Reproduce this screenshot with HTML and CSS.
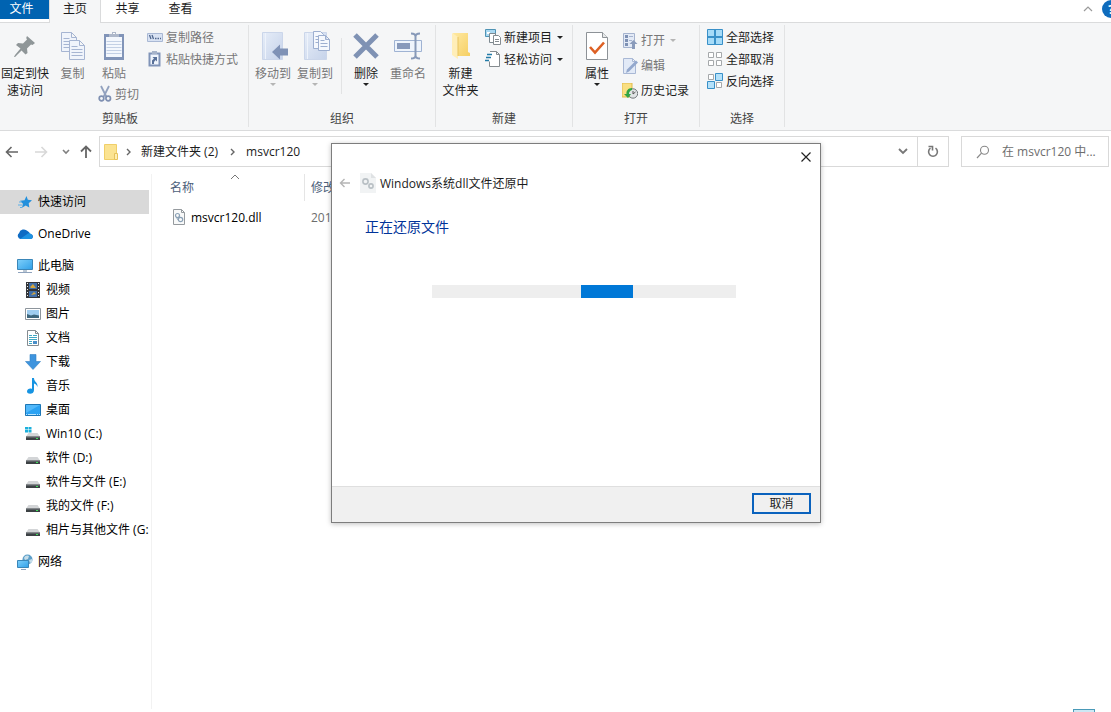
FILE: index.html
```html
<!DOCTYPE html>
<html lang="zh-CN">
<head>
<meta charset="utf-8">
<title>msvcr120</title>
<link rel="stylesheet" href="styles.css">
</head>
<body>
<svg class="defs" aria-hidden="true">
  <defs>
    <linearGradient id="blue" x1="0" y1="0" x2="1" y2="1"><stop offset="0" stop-color="#7fd0fa"/><stop offset="1" stop-color="#2f9fe8"/></linearGradient>
    <linearGradient id="pale" x1="0" y1="0" x2="1" y2="1"><stop offset="0" stop-color="#e6edf8"/><stop offset="1" stop-color="#c6d3ea"/></linearGradient>
    <linearGradient id="gold" x1="0" y1="0" x2="1" y2="1"><stop offset="0" stop-color="#ffe9a2"/><stop offset="1" stop-color="#f5cf63"/></linearGradient>
    <symbol id="drive" viewBox="0 0 16 16"><path d="M3.500 7h9l2.500 3.500H1z" fill="#d3d5d7"/><path d="M1 10.500h14v3.500H1z" fill="#3c4144"/><path d="M1 10.500h14v1H1z" fill="#777c80"/><path d="M11 12h2v1h-2z" fill="#3fe05a"/></symbol>
  </defs>
</svg>

<div class="window">
  <nav class="tabs" aria-label="功能区">
    <button class="tab tab-file">文件</button>
    <button class="tab tab-active">主页</button>
    <button class="tab tab-plain">共享</button>
    <button class="tab tab-plain">查看</button>
    <div class="tabs-end">
      <button class="icon-btn" aria-label="折叠"><svg width="10" height="6" viewBox="0 0 10 6"><path d="M1 5l4-4 4 4" fill="none" stroke="#9a9a9a" stroke-width="1.200"/></svg></button>
      <button class="help" aria-label="帮助">?</button>
    </div>
  </nav>

  <div class="ribbon">
    <section class="group group-clip">
      <div class="tools">
        <button class="big pin"><span class="art"><svg width="24" height="24" viewBox="0 0 24 24"><path d="M14 2l8 7-2.500 2-1.500-.5-4 4 .5 4.500-2 1.500-4-4-6.500 6.500L1 23l1-2 5.500-6.500L3 11l2-2 5 .5 4-4-.8-1.500z" fill="#8f9698"/></svg></span>固定到快<br>速访问</button>
        <button class="big off copy"><span class="art"><svg width="26" height="30" viewBox="0 0 26 30"><g fill="#f0f4fb" stroke="#a6b5d2"><path d="M1.500 1.500h10l5 5v14h-15zM11.500 1.500v5h5"/><path d="M3.500 7.500h6M3.500 10.500h10M3.500 13.500h10M3.500 16.500h10"/><path d="M9.500 9.500h10l5 5v14h-15zM19.500 9.500v5h5"/><path d="M11.500 15.500h6M11.500 18.500h11M11.500 21.500h11M11.500 24.500h11"/></g></svg></span>复制</button>
        <div class="stack">
          <button class="big off paste"><span class="art"><svg width="22" height="30" viewBox="0 0 22 30"><path d="M1 3h20v26H1z" fill="#8194b8"/><path d="M3 6h16v20H3z" fill="#f3f7fd"/><path d="M3.500 10.500h15M3.500 13.500h15M3.500 16.500h15M3.500 19.500h15M3.500 22.500h15" stroke="#c3d0e5"/><path d="M6 3h3V1h4v2h3v3H6z" fill="#aeb8ca"/><path d="M10 2h2v1h-2z" fill="#fff"/></svg></span>粘贴</button>
          <button class="small off cut"><svg width="14" height="18" viewBox="0 0 14 18"><path d="M3 1l5.500 11M11 1L5.500 12" stroke="#92a1be" stroke-width="1.800"/><g fill="none" stroke="#7f90b2" stroke-width="1.700"><circle cx="3.500" cy="13.500" r="2.300"/><circle cx="10.200" cy="13.500" r="2.300"/></g></svg>剪切</button>
        </div>
        <div class="rows rows-clip">
          <button class="small off"><svg width="16" height="16" viewBox="0 0 16 16"><path d="M.5 4.500h15v8H.5z" fill="#d8e2f3" stroke="#a9b8d4"/><path d="M2.500 6l1.500 4M5 6l1.500 4M8 9.500h1.500M10.500 9.500H12M13 9.500h1" stroke="#4f678f" stroke-width="1.300"/></svg>复制路径</button>
          <button class="small off"><svg width="16" height="16" viewBox="0 0 16 16"><path d="M1.500 1.500h12v14h-12z" fill="#8094b8"/><path d="M3.500 3.500h8v10h-8z" fill="#f0f5fc"/><path d="M5 0h5v3H5z" fill="#a6b3c9"/><path d="M5 13V9.500l2-2L5.500 6H10v4.500L8.500 9 7 11v2z" fill="#587099"/></svg>粘贴快捷方式</button>
        </div>
      </div>
      <h2>剪贴板</h2>
    </section>

    <section class="group group-org">
      <div class="tools">
        <button class="big off"><span class="art"><svg width="30" height="30" viewBox="0 0 30 30"><path d="M4.500 1.500h20v27h-20z" fill="url(#pale)" stroke="#cbd6ea"/><path d="M7.500 2v26" stroke="#eef3fb"/><path d="M14 21l8-7.500v4h8v7h-8v4z" fill="#7f92b6"/></svg></span>移动到<i class="drop"></i></button>
        <button class="big off"><span class="art"><svg width="30" height="30" viewBox="0 0 30 30"><path d="M4.500 1.500h22v27h-22z" fill="url(#pale)" stroke="#cbd6ea"/><path d="M7.500 2v26" stroke="#eef3fb"/><g fill="#f5f8fd" stroke="#9dafd0"><path d="M13.500.5h7l3 3v14h-10z"/><path d="M15.500 5.500h3M15.500 8.500h3M15.500 11.500h3"/><path d="M18.500 4.500h7l4 4v11h-11zM25.500 4.500v4h4M20.500 9.500h4M20.500 12.500h7M20.500 15.500h7"/></g></svg></span>复制到<i class="drop"></i></button>
        <div class="split"></div>
        <button class="big"><span class="art"><svg width="28" height="28" viewBox="0 0 28 28"><path d="M3 3l22 22M25 3L3 25" stroke="#7f92b4" stroke-width="5"/></svg></span>删除<i class="drop"></i></button>
        <button class="big off"><span class="art"><svg width="30" height="28" viewBox="0 0 30 28"><path d="M1.500 8.500h27v11h-27z" fill="#eef4fc" stroke="#9fb3d3"/><path d="M4 11h13v6H4z" fill="#8799bb"/><path d="M18 1.500c3 0 4.500 1 4.500 3v19c0 2-1.500 3-4.500 3M27 1.500c-3 0-4.500 1-4.500 3M27 26.500c-3 0-4.500-1-4.500-3" fill="none" stroke="#8799b8" stroke-width="2"/></svg></span>重命名</button>
      </div>
      <h2>组织</h2>
    </section>

    <section class="group group-new">
      <div class="tools">
        <button class="big"><span class="art"><svg width="20" height="30" viewBox="0 0 20 30"><path d="M2 2h15v19l2 1v3H6z" fill="url(#gold)"/><path d="M1 2l6 4v22l-6-4z" fill="#ffeeb8"/><path d="M7 6v19" stroke="#e7c45e"/></svg></span>新建<br>文件夹</button>
        <div class="rows">
          <button class="small"><svg width="16" height="16" viewBox="0 0 16 16"><path d="M.5.500h10v7H.5z" fill="#a9d8f1" stroke="#4f93b4"/><path d="M2 3h3v2H2z" fill="#fff"/><path d="M4.500 4.500h6v9h-6z" fill="#fff" stroke="#7d8990"/><path d="M8.500 6.500h5l2 2v7h-7zM10 10.500h4M10 12.500h4" fill="#fff" stroke="#858c91"/></svg>新建项目<i class="drop"></i></button>
          <button class="small"><svg width="16" height="16" viewBox="0 0 16 16"><path d="M5 .5h6.500l3 3v12H4.500v-5M11.500.500v3h3" fill="#fff" stroke="#858b8f"/><path d="M2 3.500h5M1 6.500h5M0 9.500h4" stroke="#247ca8" stroke-width="1.400"/></svg>轻松访问<i class="drop"></i></button>
        </div>
      </div>
      <h2>新建</h2>
    </section>

    <section class="group group-open">
      <div class="tools">
        <button class="big"><span class="art"><svg width="22" height="30" viewBox="0 0 22 30"><path d="M.5 1.500h16l5 5v22H.5z" fill="#fff" stroke="#8d9297"/><path d="M16.500 1.500v5h5" fill="#e7e9ea" stroke="#8d9297"/><path d="M4 16l5 5.500 9-10" fill="none" stroke="#dd6024" stroke-width="2.600"/></svg></span>属性<i class="drop"></i></button>
        <div class="rows rows-open">
          <button class="small off"><svg width="16" height="16" viewBox="0 0 16 16"><path d="M1.500.500h11v14h-11z" fill="#e3eaf6" stroke="#a5b3ce"/><path d="M3 2h3v3H3zM3 6h3v3H3zM3 10h3v3H3z" fill="#7e91b4"/><path d="M7 3.500h4M7 7.500h3" stroke="#a5b3ce"/><path d="M11.500 7l4 4H13v5h-3v-5H7.500z" fill="#8a9bbb"/></svg>打开<i class="drop"></i></button>
          <button class="small off"><svg width="16" height="16" viewBox="0 0 16 16"><path d="M1.500.500h9l3 3v12h-12zM10.500.500v3h3" fill="#e2eaf7" stroke="#a9b8d5"/><path d="M4 15l1-3.500 9-9 2 2-9 9z" fill="#93a8cd"/></svg>编辑</button>
          <button class="small"><svg width="16" height="16" viewBox="0 0 16 16"><path d="M0 0h10v14H0z" fill="#f9df82" stroke="#e1b94a"/><circle cx="11" cy="10.500" r="4.700" fill="#e1e4e5" stroke="#73797c"/><path d="M11 8v3l2.500-2" fill="none" stroke="#555"/><path d="M10 5C6 5 4 8 4.500 11H2l4 4 3-4H7c0-2 1-3.500 3-4z" fill="#31a544"/></svg>历史记录</button>
        </div>
      </div>
      <h2>打开</h2>
    </section>

    <section class="group group-select">
      <div class="tools">
        <div class="rows">
          <button class="small"><svg width="16" height="16" viewBox="0 0 16 16"><path d="M.5.500h15v15H.5z" fill="#a6dbf8" stroke="#3990c8"/><path d="M8 0v16M0 8h16" stroke="#3990c8" stroke-width="2"/></svg>全部选择</button>
          <button class="small"><svg width="16" height="16" viewBox="0 0 16 16"><path d="M1.500 1.500h5v5h-5zM9.500 1.500h5v5h-5zM1.500 9.500h5v5h-5zM9.500 9.500h5v5h-5z" fill="#fff" stroke="#a5a8ab"/></svg>全部取消</button>
          <button class="small"><svg width="16" height="16" viewBox="0 0 16 16"><path d="M1.500 1.500h5v5h-5zM9.500 9.500h5v5h-5z" fill="#fff" stroke="#a5a8ab"/><path d="M8.500.500h7v7h-7zM.5 8.500h7v7H.5z" fill="#b4e1fa" stroke="#3990c8"/></svg>反向选择</button>
        </div>
      </div>
      <h2>选择</h2>
    </section>
  </div>

  <div class="address">
    <div class="nav">
      <button class="icon-btn" aria-label="后退"><svg width="14" height="12" viewBox="0 0 14 12"><path d="M13 6H1.500M6.500 1l-5 5 5 5" fill="none" stroke="#666" stroke-width="1.600"/></svg></button>
      <button class="icon-btn" aria-label="前进"><svg width="14" height="12" viewBox="0 0 14 12"><path d="M1 6h11.500M7.500 1l5 5-5 5" fill="none" stroke="#d8d8d8" stroke-width="1.600"/></svg></button>
      <button class="icon-btn recent" aria-label="最近"><svg width="8" height="6" viewBox="0 0 8 6"><path d="M1 1l3 3 3-3" fill="none" stroke="#808080" stroke-width="1.600"/></svg></button>
      <button class="icon-btn" aria-label="向上"><svg width="12" height="14" viewBox="0 0 12 14"><path d="M6 13V1.500M1 6.500l5-5 5 5" fill="none" stroke="#666" stroke-width="1.800"/></svg></button>
    </div>
    <div class="path">
      <svg width="14" height="18" viewBox="0 0 14 18"><path d="M.5 1.500h12v15H.5z" fill="#fbe391" stroke="#f0cf69"/><path d="M10.500 10.500h3v6h-3z" fill="#ffeeb2" stroke="#e6c25a"/></svg>
      <svg class="crumb-arrow" width="6" height="8" viewBox="0 0 6 8"><path d="M1 1l3 3-3 3" fill="none" stroke="#666" stroke-width="1.400"/></svg>
      <a href="#">新建文件夹 (2)</a>
      <svg class="crumb-arrow crumb-next" width="6" height="8" viewBox="0 0 6 8"><path d="M1 1l3 3-3 3" fill="none" stroke="#666" stroke-width="1.400"/></svg>
      <a href="#">msvcr120</a>
      <button class="icon-btn path-drop" aria-label="展开"><svg width="10" height="7" viewBox="0 0 10 7"><path d="M1 1l4 4 4-4" fill="none" stroke="#777" stroke-width="1.800"/></svg></button>
      <button class="icon-btn refresh" aria-label="刷新"><svg width="12" height="13" viewBox="0 0 12 13"><path d="M8.500 3.200A4.400 4.400 0 1 1 3.500 3.200" fill="none" stroke="#777" stroke-width="1.600"/><path d="M1.500 1.500h4v4" fill="none" stroke="#777" stroke-width="1.600"/></svg></button>
    </div>
    <label class="search">
      <svg width="14" height="14" viewBox="0 0 14 14"><circle cx="8.500" cy="5.200" r="4" fill="none" stroke="#888" stroke-width="1.100"/><path d="M5.500 8.200L1 13" stroke="#888" stroke-width="1.200"/></svg>
      <input type="text" aria-label="搜索" placeholder="在 msvcr120 中...">
    </label>
  </div>

  <div class="body">
    <aside class="side">
      <a href="#" class="node current"><svg width="16" height="16" viewBox="0 0 16 16"><path d="M9.500 2l1.300 3.800 4.200.4-3.300 3 .6 4.300-3.600-2-3.700 2.300.9-4-2.900-3 4.500-.6z" fill="#2390dc"/><path d="M2 8h3M1 11h4M3 13.500h2" stroke="#5cb0e8"/></svg>快速访问</a>
      <a href="#" class="node spaced"><svg width="16" height="16" viewBox="0 0 16 16"><path d="M3.500 13A3.300 3.300 0 0 1 2 7.200 5 5 0 0 1 10.500 5a4 4 0 0 1 2.500 3c4 0 3.700 5 .5 5z" fill="#0f6cc4"/><path d="M3 13l8-5.500c4-1.500 6.500 5.500 2.500 5.500z" fill="#1f93e2"/></svg>OneDrive</a>
      <a href="#" class="node spaced"><svg width="16" height="16" viewBox="0 0 16 16"><path d="M.5 1.500h15v10H.5z" fill="url(#blue)" stroke="#3a86b8"/><path d="M6 12h4v2H6z" fill="#bcc8d4"/><path d="M1 14.500h14" stroke="#8fa3bd"/></svg>此电脑</a>
      <a href="#" class="node child"><svg width="16" height="16" viewBox="0 0 16 16"><path d="M1 0h14v16H1z" fill="#33363a"/><path d="M4 1h8v6H4zM4 9h8v6H4z" fill="#416fa9"/><path d="M5 5l3-3 3 4H6zM6 13l3-3 2 2z" fill="#d5a63d"/><path d="M2.500 1v14M13.500 1v14" stroke="#eee" stroke-dasharray="1 2"/></svg>视频</a>
      <a href="#" class="node child"><svg width="16" height="16" viewBox="0 0 16 16"><path d="M.5 2.500h15v11H.5z" fill="#fff" stroke="#8d959c"/><path d="M2 4h12v8H2z" fill="#9fcdf0"/><path d="M2 8l4 1.500 3-1 5 1V12H2z" fill="#3d667c"/></svg>图片</a>
      <a href="#" class="node child"><svg width="16" height="16" viewBox="0 0 16 16"><path d="M2.500.500h8l3 3v12h-11zM10.500.500v3h3" fill="#fff" stroke="#858c91"/><path d="M4 5.500h3M4 7.500h8M4 9.500h8M4 11.500h3M4 13.500h3M8 5.500h4" stroke="#3fa8c4"/><path d="M8 11h4v3H8z" fill="#4a8fc9"/></svg>文档</a>
      <a href="#" class="node child"><svg width="16" height="16" viewBox="0 0 16 16"><path d="M5 .5h6v7h4.500L8 15.500.5 7.500H5z" fill="#3e94de" stroke="#3180c3" stroke-width=".6"/></svg>下载</a>
      <a href="#" class="node child"><svg width="16" height="16" viewBox="0 0 16 16"><path d="M7 0h2c0 4 4 4 3.500 9-.7-2-1.700-3-3.500-3.500V12c0 5-7 4.500-7 1.500C2 11 5 10 7 11z" fill="#1694e2"/></svg>音乐</a>
      <a href="#" class="node child"><svg width="16" height="16" viewBox="0 0 16 16"><path d="M.5 2.500h15v11H.5z" fill="#2ba2f3" stroke="#1d76b5"/><path d="M1 3h14L1 11z" fill="#51b8fa"/><path d="M1 12.500h14" stroke="#b9e4ff" stroke-dasharray="1 1 8 1"/></svg>桌面</a>
      <a href="#" class="node child"><svg width="16" height="16" viewBox="0 0 16 16"><use href="#drive"/><path d="M0 1h3v2.500H0zM3.500 1h3v2.500h-3zM0 4h3v2.500H0zM3.500 4h3v2.500h-3z" fill="#1bb0dc"/></svg>Win10 (C:)</a>
      <a href="#" class="node child"><svg width="16" height="16"><use href="#drive"/></svg>软件 (D:)</a>
      <a href="#" class="node child"><svg width="16" height="16"><use href="#drive"/></svg>软件与文件 (E:)</a>
      <a href="#" class="node child"><svg width="16" height="16"><use href="#drive"/></svg>我的文件 (F:)</a>
      <a href="#" class="node child"><svg width="16" height="16"><use href="#drive"/></svg>相片与其他文件 (G:</a>
      <a href="#" class="node spaced"><svg width="16" height="16" viewBox="0 0 16 16"><circle cx="10.500" cy="5.500" r="5" fill="#5d9fc9"/><path d="M7 4c1-3 4-3 5-2l-1 3-3 1zM12 6l3-1v3l-2 1z" fill="#c5dde9"/><path d="M.5 6.500h11v7H.5z" fill="url(#blue)" stroke="#3a86b8"/><path d="M4 15.500h5" stroke="#8fa3bd"/></svg>网络</a>
    </aside>
    <main class="files">
      <div class="columns">
        <button class="col col-name">名称</button>
        <button class="col col-date">修改日期</button>
        <svg class="sort" width="10" height="6" viewBox="0 0 10 6"><path d="M1 5l4-4 4 4" fill="none" stroke="#777"/></svg>
      </div>
      <div class="file">
        <a href="#" class="file-name"><svg width="16" height="16" viewBox="0 0 16 16"><path d="M2.500.500h8l3 3v12h-11zM10.500.500v3h3" fill="#f8f9f9" stroke="#959a9e"/><g fill="none" stroke="#8aa0b5" stroke-width="1.200"><circle cx="6.500" cy="6.500" r="2"/><circle cx="9.500" cy="10.500" r="2.200"/></g><path d="M5 8l3 4" stroke="#8aa0b5"/></svg>msvcr120.dll</a>
        <span class="file-date">2013/10/5</span>
      </div>
    </main>
  </div>
  <footer class="status"><button class="view" aria-label="详细信息"></button></footer>
</div>

<div class="dialog" role="dialog" aria-labelledby="dialog-title">
  <div class="dialog-top"><button class="icon-btn" aria-label="关闭"><svg width="10" height="10" viewBox="0 0 10 10"><path d="M.5.500l9 9M9.500.500l-9 9" stroke="#222" stroke-width="1.200"/></svg></button></div>
  <div class="dialog-title">
    <button class="icon-btn" aria-label="返回"><svg width="12" height="10" viewBox="0 0 12 10"><path d="M11 5H1.500M5.500 1l-4 4 4 4" fill="none" stroke="#b5b5b5" stroke-width="1.400"/></svg></button>
    <svg width="16" height="20" viewBox="0 0 16 20"><path d="M0 0h11l5 5v15H0z" fill="#f1f3f4"/><path d="M11 0v5h5z" fill="#dfe2e4"/><g fill="none" stroke="#b9c0c5" stroke-width="1.600"><circle cx="5.500" cy="8.500" r="2.600"/><circle cx="11" cy="13" r="2.100"/></g></svg>
    <span id="dialog-title">Windows系统dll文件还原中</span>
  </div>
  <div class="dialog-body">
    <h1>正在还原文件</h1>
    <div class="bar" role="progressbar" aria-label="正在还原文件"><div class="chunk"></div></div>
  </div>
  <div class="dialog-foot"><button class="cancel">取消</button></div>
</div>
</body>
</html>
```

FILE: styles.css
```css
* { box-sizing: border-box; }
body {
  margin: 0;
  background: #fff;
  color: #1c1c1c;
  font: 12px/17px "Open Sans", "Noto Sans CJK SC", sans-serif;
}
button, input { font: inherit; color: inherit; background: none; border: 0; padding: 0; margin: 0; }
a { color: inherit; text-decoration: none; }
h1, h2 { margin: 0; font-weight: normal; }
svg { display: block; flex: none; }
.defs { position: absolute; width: 0; height: 0; }
.window { display: flex; flex-direction: column; height: 100vh; overflow: hidden; }
.icon-btn { display: flex; align-items: center; justify-content: center; }

/* Tabs */
.tabs { display: flex; height: 23px; border-bottom: 1px solid #dadbdc; flex: none; }
.tab { padding-bottom: 6px; }
.tab-file { width: 49px; height: 19px; padding: 0 6px 3px 0; background: #0063b1; color: #fff; }
.tab-active { width: 52px; height: 23px; background: #f5f6f7; border-right: 1px solid #dadbdc; border-left: 1px solid #dadbdc; }
.tab-plain { width: 53px; }
.tabs-end { display: flex; gap: 9px; margin: 0 -9px 0 auto; padding-bottom: 4px; align-items: center; }
.help { width: 18px; height: 18px; border-radius: 9px; background: #0f6cbd; color: #fff; font-weight: bold; }

/* Ribbon */
.ribbon { display: flex; height: 108px; flex: none; padding: 2px 0 3px; background: #f5f6f7; border-bottom: 1px solid #dadbdc; }
.group { display: flex; flex-direction: column; border-right: 1px solid #e2e3e4; }
.group h2 { margin-top: auto; font-size: 12px; text-align: center; color: #444; }
.group-clip { width: 249px; }
.group-clip h2 { padding-right: 8px; }
.group-org { width: 187px; }
.group-new { width: 137px; }
.group-open { width: 127px; }
.group-select { width: 85px; }
.tools { display: flex; align-items: flex-start; }
.group-org .tools { padding-left: 3px; }
.group-open .tools { padding-left: 1px; }
.group-select .tools { padding-left: 7px; }
.big { width: 42px; padding-top: 5px; white-space: nowrap; text-align: center; }
.art { display: flex; align-items: center; justify-content: center; height: 32px; margin-bottom: 3px; }
.pin { width: 50px; }
.copy { width: 45px; }
.group-new .big { width: 49px; }
.group-open .big { width: 46px; }
.off { color: #777; }
.off .drop { border-top-color: #b5b5b5; }
.stack { width: 49px; }
.paste { width: 38px; }
.stack .small { height: 24px; padding-left: 3px; }
.split { width: 1px; height: 56px; margin: 13px 3px 0 5px; background: #e2e3e4; }
.drop { display: block; width: 0; height: 0; border: 3px solid transparent; border-top-color: #222; border-bottom: 0; }
.big .drop { margin: 1px auto 0; }
.small .drop { margin-left: 2px; }
.rows { display: flex; flex-direction: column; align-items: flex-start; padding-top: 1px; }
.rows-clip { padding-left: 3px; }
.small { display: flex; align-items: center; gap: 3px; height: 22px; white-space: nowrap; }
.rows-open { padding-top: 3px; padding-left: 2px; }
.rows-open .small { height: 25px; }

/* Address */
.address { display: flex; height: 43px; padding: 5px 2px 7px 5px; flex: none; }
.nav { display: flex; align-items: center; gap: 15px; width: 94px; }
.recent { margin: 0 -5px 0 -1px; }
.path { display: flex; align-items: center; flex: 1; border: 1px solid #d9d9d9; padding-left: 4px; }
.crumb-arrow { margin: 0 9px 0 8px; }
.crumb-next { margin: 0 10px 0 12px; }
.path-drop { width: 28px; margin-left: auto; }
.refresh { width: 31px; align-self: stretch; border-left: 1px solid #d9d9d9; }
.search { display: flex; align-items: center; gap: 12px; width: 148px; margin-left: 12px; padding-left: 14px; border: 1px solid #d9d9d9; }
.search input { flex: 1; min-width: 0; outline: 0; }
.search input::placeholder { color: #6d6d6d; opacity: 1; }

/* Body */
.body { display: flex; flex: 1; min-height: 0; }
.side { width: 152px; padding: 16px 2px 0 0; border-right: 1px solid #f2f2f2; overflow: hidden; flex: none; color: #000; }
.node { display: flex; align-items: center; gap: 5px; height: 24px; padding: 0 0 1px 17px; white-space: nowrap; }
.current { background: #d9d9d9; }
.spaced { margin-top: 8px; }
.child { padding-left: 25px; }
.files { flex: 1; min-width: 0; }
.columns { position: relative; display: flex; height: 27px; color: #4c607a; }
.col { text-align: left; }
.col-name { width: 153px; padding-left: 18px; border-right: 1px solid #e5e5e5; }
.col-date { padding-left: 6px; }
.sort { position: absolute; left: 78px; top: 0; }
.file { display: flex; align-items: center; height: 24px; margin-top: 4px; color: #000; }
.file-name { display: flex; align-items: center; gap: 4px; width: 153px; padding-left: 19px; }
.file-date { padding-left: 6px; color: #6d6d6d; }
.status { display: flex; justify-content: flex-end; height: 3px; padding-right: 16px; flex: none; }
.view { width: 22px; background: #cce8f4; border: 1px solid #4a9ab8; border-bottom: 0; }

/* Dialog */
.dialog {
  position: absolute;
  left: 331px;
  top: 143px;
  display: flex;
  flex-direction: column;
  width: 490px;
  height: 380px;
  background: #fff;
  border: 1px solid #7d7d7d;
  box-shadow: 0 1px 5px rgba(0, 0, 0, .25);
}
.dialog-top { display: flex; justify-content: flex-end; height: 26px; padding-right: 9px; }
.dialog-title { display: flex; align-items: center; height: 26px; padding-left: 7px; }
.dialog-title span { padding-left: 4px; }
.dialog-title .icon-btn { margin-right: 9px; }
.dialog-body { flex: 1; padding: 21px 84px 0 33px; }
.dialog-body h1 { font-size: 14px; line-height: 20px; color: #003399; }
.bar { height: 13px; margin: 48px 0 0 67px; background: #eee; }
.chunk { width: 17%; height: 100%; margin-left: 49%; background: #0078d7; }
.dialog-foot { display: flex; align-items: center; justify-content: flex-end; height: 36px; padding: 0 9px 2px 0; background: #f0f0f0; border-top: 1px solid #dfdfdf; }
.cancel { width: 59px; height: 21px; line-height: 17px; background: #f0f0f0; border: 2px solid #0a62bd; }
```
